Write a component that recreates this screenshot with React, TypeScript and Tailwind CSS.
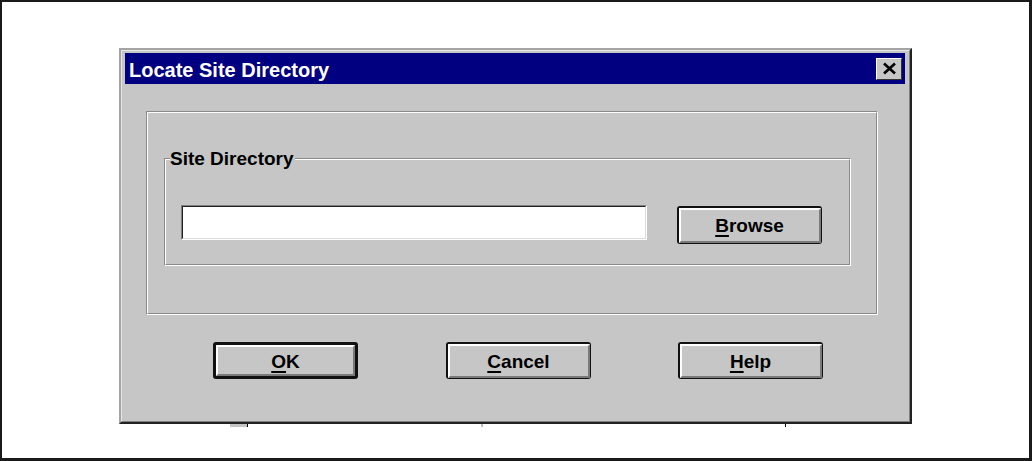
function Button({ accel, rest, isDefault }: { accel: string; rest: string; isDefault?: boolean }) {
  return (
    <div className={isDefault ? "h-[37px] w-[145px] rounded-[3px] bg-[#111] p-[3px]" : "h-[37px] w-[145px] rounded-[3px] bg-[#111] p-[1.5px]"}>
      <div className="flex h-full items-center justify-center border-2 border-t-white border-l-white border-r-[#7a7a7a] border-b-[#7a7a7a] bg-[#c6c6c6] pt-[3px] text-[19px] font-bold text-black">
        <span>
          <span className="underline decoration-2 underline-offset-[3px]">{accel}</span>
          {rest}
        </span>
      </div>
    </div>
  );
}

function Etched({ className, children }: { className: string; children?: React.ReactNode }) {
  return (
    <div className={`border border-t-[#8a8a8a] border-l-[#8a8a8a] border-r-white border-b-white ${className}`}>
      <div className="h-full border border-t-white border-l-white border-r-[#8a8a8a] border-b-[#8a8a8a]">
        {children}
      </div>
    </div>
  );
}

export default function App() {
  return (
    <div
      className="h-[461px] w-[1032px] border-t-2 border-l-2 border-r-[3px] border-b-[3px] border-[#1a1a1a] bg-white pl-[117px] pt-[46px]"
      style={{ fontFamily: '"Liberation Sans", Arial, sans-serif' }}
    >
      {/* dialog */}
      <div className="h-[376px] w-[793px] border-2 border-t-[#a4a4a4] border-l-[#a4a4a4] border-r-[#222] border-b-[#222] bg-[#c6c6c6]">
        <div className="h-full border border-t-[#e6e6e6] border-l-[#e6e6e6] border-r-[#808080] border-b-[#808080] pl-[3px] pr-[4px] pt-[2px]">
          {/* title bar */}
          <div className="flex h-[31px] items-center justify-between bg-[#000080] pl-[4px] pr-[3px]">
            <span className="pt-[3px] text-[20px] font-bold leading-none text-white">Locate Site Directory</span>
            <div className="flex h-[22px] w-[26px] items-center justify-center border border-t-white border-l-white border-r-[#333] border-b-[#333] bg-[#c6c6c6]">
              <svg width="15" height="13" viewBox="0 0 15 13">
                <path d="M2 1.5 L13 11.5 M13 1.5 L2 11.5" stroke="#000" strokeWidth="2.6" />
              </svg>
            </div>
          </div>

          {/* outer panel */}
          <Etched className="ml-[21px] mt-[27px] h-[204px] w-[732px]">
            <Etched className="relative ml-[16px] mt-[45px] h-[108px] w-[687px]">
              <span className="absolute left-[5px] top-[-11px] bg-[#c6c6c6] pr-[1px] text-[19px] font-bold leading-[22px] text-black">
                Site Directory
              </span>
              <div className="ml-[15px] mt-[45px] flex items-start">
                <div className="h-[35px] w-[466px] border border-t-[#808080] border-l-[#808080] border-r-white border-b-white">
                  <div className="h-full border border-t-[#222] border-l-[#222] border-r-[#dcdcdc] border-b-[#dcdcdc] bg-white" />
                </div>
                <div className="ml-[30px] mt-px">
                  <div className="h-[38px] w-[145px] rounded-[3px] bg-[#111] p-[1.5px]">
                    <div className="flex h-full items-center justify-center border-2 border-t-white border-l-white border-r-[#7a7a7a] border-b-[#7a7a7a] bg-[#c6c6c6] pt-[3px] text-[19px] font-bold text-black">
                      <span>
                        <span className="underline decoration-2 underline-offset-[3px]">B</span>rowse
                      </span>
                    </div>
                  </div>
                </div>
              </div>
            </Etched>
          </Etched>

          {/* buttons */}
          <div className="mt-[27px] flex">
            <div className="ml-[88px]">
              <Button accel="O" rest="K" isDefault />
            </div>
            <div className="ml-[88px]">
              <Button accel="C" rest="ancel" />
            </div>
            <div className="ml-[87px]">
              <Button accel="H" rest="elp" />
            </div>
          </div>
        </div>
      </div>

      {/* edges of the window behind */}
      <div className="flex h-[3px]">
        <div className="w-[111px]" />
        <div className="w-[17px] bg-[#c4c4c4]" />
        <div className="w-px bg-black" />
        <div className="w-[233px]" />
        <div className="w-[2px] bg-[#bdbdbd]" />
        <div className="w-[302px]" />
        <div className="w-px bg-black" />
      </div>
    </div>
  );
}
